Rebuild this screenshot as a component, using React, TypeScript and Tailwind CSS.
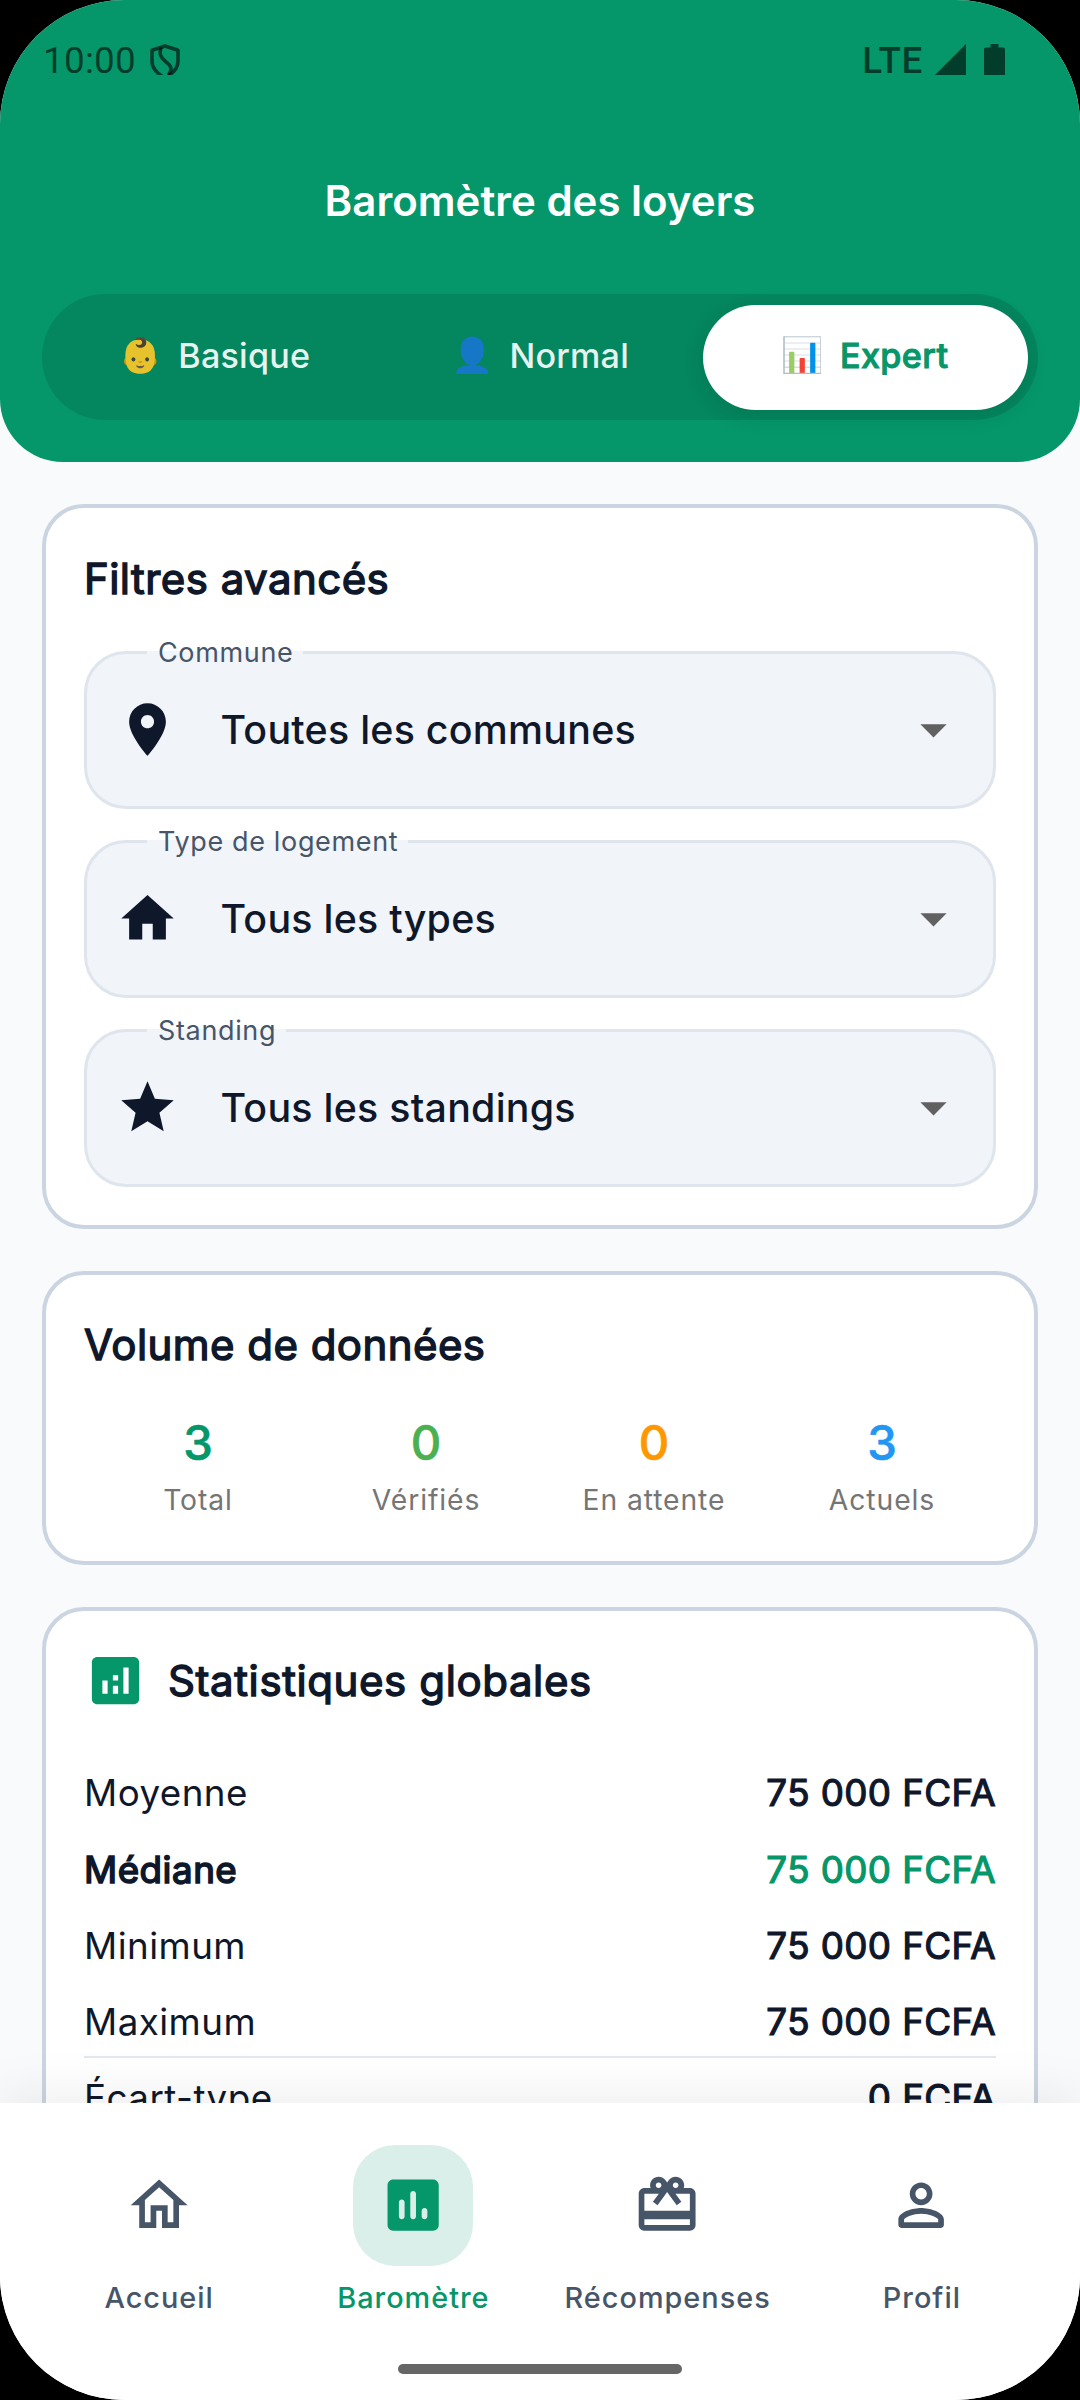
import React from "react";

const ICONS = {
  pin: "M12 2C8.13 2 5 5.13 5 9c0 5.25 7 13 7 13s7-7.75 7-13c0-3.87-3.13-7-7-7zm0 9.5c-1.38 0-2.5-1.12-2.5-2.5s1.12-2.5 2.5-2.5 2.5 1.12 2.5 2.5-1.12 2.5-2.5 2.5z",
  home: "M10 20v-6h4v6h5v-8h3L12 3 2 12h3v8z",
  star: "M12 17.27L18.18 21l-1.64-7.03L22 9.24l-7.19-.61L12 2 9.19 8.63 2 9.24l5.46 4.73L5.82 21z",
  arrow: "M7 10l5 5 5-5z",
  analytics:
    "M19 3H5c-1.1 0-2 .9-2 2v14c0 1.1.9 2 2 2h14c1.1 0 2-.9 2-2V5c0-1.1-.9-2-2-2zM9 17H7v-5h2v5zm4 0h-2v-3h2v3zm0-5h-2v-2h2v2zm4 5h-2V7h2v10z",
  homeOutline:
    "M12 5.69l5 4.5V18h-2v-6H9v6H7v-7.81l5-4.5M12 3L2 12h3v8h6v-6h2v6h6v-8h3L12 3z",
  chart:
    "M19 3H5c-1.1 0-2 .9-2 2v14c0 1.1.9 2 2 2h14c1.1 0 2-.9 2-2V5c0-1.1-.9-2-2-2zM8 17c-.55 0-1-.45-1-1v-5c0-.55.45-1 1-1s1 .45 1 1v5c0 .55-.45 1-1 1zm4 0c-.55 0-1-.45-1-1V8c0-.55.45-1 1-1s1 .45 1 1v8c0 .55-.45 1-1 1zm4 0c-.55 0-1-.45-1-1v-2c0-.55.45-1 1-1s1 .45 1 1v2c0 .55-.45 1-1 1z",
  gift: "M20 6h-2.18c.11-.31.18-.65.18-1 0-1.66-1.34-3-3-3-1.05 0-1.96.54-2.5 1.35l-.5.67-.5-.68C10.96 2.54 10.05 2 9 2 7.34 2 6 3.34 6 5c0 .35.07.69.18 1H4c-1.11 0-1.99.89-1.99 2L2 19c0 1.11.89 2 2 2h16c1.11 0 2-.89 2-2V8c0-1.11-.89-2-2-2zm-5-2c.55 0 1 .45 1 1s-.45 1-1 1-1-.45-1-1 .45-1 1-1zM9 4c.55 0 1 .45 1 1s-.45 1-1 1-1-.45-1-1 .45-1 1-1zm11 15H4v-2h16v2zm0-5H4V8h5.08L7 10.83 8.62 12 11 8.76l1-1.36 1 1.36L15.38 12 17 10.83 14.92 8H20v6z",
  person:
    "M12 6c1.1 0 2 .9 2 2s-.9 2-2 2-2-.9-2-2 .9-2 2-2m0 9c2.7 0 5.8 1.29 6 2v1H6v-.99c.2-.72 3.3-2.01 6-2.01m0-11C9.79 4 8 5.79 8 8s1.79 4 4 4 4-1.79 4-4-1.79-4-4-4zm0 9c-2.67 0-8 1.34-8 4v2c0 .55.45 1 1 1h14c.55 0 1-.45 1-1v-2c0-2.66-5.33-4-8-4z",
};

type IconName = keyof typeof ICONS;

function Icon({ name, className }: { name: IconName; className: string }) {
  return (
    <svg viewBox="0 0 24 24" fill="currentColor" className={className}>
      <path d={ICONS[name]} />
    </svg>
  );
}

const tabs = [
  { emoji: "👶", label: "Basique", active: false },
  { emoji: "👤", label: "Normal", active: false },
  { emoji: "📊", label: "Expert", active: true },
];

const filters: { label: string; value: string; icon: IconName }[] = [
  { label: "Commune", value: "Toutes les communes", icon: "pin" },
  { label: "Type de logement", value: "Tous les types", icon: "home" },
  { label: "Standing", value: "Tous les standings", icon: "star" },
];

const volumes = [
  { value: 3, label: "Total", color: "text-[#059669]" },
  { value: 0, label: "Vérifiés", color: "text-[#4caf50]" },
  { value: 0, label: "En attente", color: "text-[#ff9800]" },
  { value: 3, label: "Actuels", color: "text-[#2196f3]" },
];

const stats = [
  { label: "Moyenne", value: "75 000 FCFA", highlight: false },
  { label: "Médiane", value: "75 000 FCFA", highlight: true },
  { label: "Minimum", value: "75 000 FCFA", highlight: false },
  { label: "Maximum", value: "75 000 FCFA", highlight: false },
];

const navItems: { label: string; icon: IconName; active: boolean }[] = [
  { label: "Accueil", icon: "homeOutline", active: false },
  { label: "Baromètre", icon: "chart", active: true },
  { label: "Récompenses", icon: "gift", active: false },
  { label: "Profil", icon: "person", active: false },
];

function StatusBar() {
  return (
    <div className="flex h-[121px] items-center justify-between pl-[43px] pr-[75px] font-['Roboto',sans-serif] text-[36.75px] text-black/60">
      <div className="flex items-center gap-[14px]">
        <span className="tracking-[0.3px]">10:00</span>
        <svg
          viewBox="0 0 30 31"
          className="mb-[3px] h-[31px] w-[30px]"
          fill="none"
          stroke="currentColor"
          strokeWidth="3.6"
          strokeLinejoin="round"
        >
          <path d="M12 32C5.500 28 2 23 2 17V6.300L15 2l13 4.300V17c0 6-3.500 11-10 15" />
          <path d="M11 3.500C9 10 10.500 13.500 15.500 17.500 21.500 22 22.500 25 18.500 31" />
        </svg>
      </div>
      <div className="flex items-center">
        <span className="font-medium tracking-[0.7px]">LTE</span>
        <svg viewBox="0 0 31 31" className="mb-[3px] ml-[12px] h-[31px] w-[31px]" fill="currentColor">
          <path d="M31 0v31H0z" />
        </svg>
        <svg viewBox="0 0 21 31" className="mb-[3px] ml-[18px] h-[31px] w-[21px]" fill="currentColor">
          <path d="M6.500 0h8v3.500H19q2 0 2 2V31H0V5.500q0-2 2-2h4.500z" />
        </svg>
      </div>
    </div>
  );
}

function Header() {
  return (
    <header className="h-[462px] shrink-0 rounded-b-[63px] bg-[#059669]">
      <StatusBar />
      <h1 className="flex h-[158px] items-center justify-center text-[42px] font-semibold text-white">
        Baromètre des loyers
      </h1>
      <div className="mx-[42px] mt-[15px] flex h-[126px] rounded-full bg-black/10 p-[10.5px]">
        {tabs.map((tab) => (
          <div
            key={tab.label}
            className={
              tab.active
                ? "flex flex-1 items-center justify-center gap-[16px] rounded-full bg-white pb-[2px] text-[34.125px] font-medium tracking-[0.4px] text-[#059669] shadow-[0_5px_21px_rgba(0,0,0,0.1)] [-webkit-text-stroke:1px]"
                : "flex flex-1 items-center justify-center gap-[16px] pb-[2px] text-[34.125px] font-medium tracking-[0.2px] text-white opacity-90"
            }
          >
            <span className="font-['Noto_Color_Emoji',sans-serif] text-[34.125px] tracking-normal">
              {tab.emoji}
            </span>
            <span>{tab.label}</span>
          </div>
        ))}
      </div>
    </header>
  );
}

function Card({ children }: { children: React.ReactNode }) {
  return (
    <section className="shrink-0 rounded-[42px] border-4 border-[#cbd5e1] bg-white p-[38px]">
      {children}
    </section>
  );
}

function CardTitle({ children }: { children: React.ReactNode }) {
  return (
    <h2 className="text-[42px] leading-[64px] font-normal tracking-[0.45px] [-webkit-text-stroke:1.4px]">
      {children}
    </h2>
  );
}

function FilterField({ label, value, icon }: { label: string; value: string; icon: IconName }) {
  return (
    <div className="relative flex h-[157.5px] items-center rounded-[42px] border-[3px] border-[#dee5ed] bg-[#f1f4f9] px-[28.5px]">
      {/* floating label sits on the notched top border */}
      <div className="absolute -top-[3px] left-[60px] flex h-[3px] items-center bg-[#f1f4f9] pr-[10px] pl-[11px] text-[27px] tracking-[0.65px] text-[#475569]">
        <span className="mt-[2px]">{label}</span>
      </div>
      <Icon name={icon} className="size-[63px]" />
      <span className="ml-[42px] flex-1 text-[39.375px] font-medium tracking-[0.25px]">{value}</span>
      <Icon name="arrow" className="size-[63px] text-[#616161]" />
    </div>
  );
}

function StatRow({ label, value, highlight }: { label: string; value: string; highlight: boolean }) {
  return (
    <div className="flex h-[54px] items-center justify-between text-[36.75px]">
      <span
        className={
          highlight ? "tracking-[0.5px] [-webkit-text-stroke:1.6px]" : "tracking-[0.45px]"
        }
      >
        {label}
      </span>
      <span
        className={
          highlight
            ? "tracking-[0.4px] text-[#059669] [-webkit-text-stroke:1.2px]"
            : "tracking-[0.4px] [-webkit-text-stroke:1.2px]"
        }
      >
        {value}
      </span>
    </div>
  );
}

function BottomNav() {
  return (
    <nav className="relative flex h-[297px] shrink-0 flex-col items-center bg-white shadow-[0_-5px_52px_rgba(0,0,0,0.08)]">
      <div className="grid w-full grid-cols-4 px-[31.5px] pt-[42px]">
        {navItems.map((item) => (
          <div
            key={item.label}
            className={
              item.active
                ? "flex flex-col items-center text-[#059669]"
                : "flex flex-col items-center text-[#475569]"
            }
          >
            <div
              className={
                item.active
                  ? "flex size-[120.75px] items-center justify-center rounded-[42px] bg-[#059669]/15"
                  : "flex size-[120.75px] items-center justify-center"
              }
            >
              <Icon name={item.icon} className="size-[68.25px]" />
            </div>
            <span className="mt-[11px] pl-[1px] text-[28.875px] leading-[42px] font-medium tracking-[1px]">
              {item.label}
            </span>
          </div>
        ))}
      </div>
      <div className="mt-auto mb-[26px] h-[10px] w-[284px] rounded-full bg-[#666666]" />
    </nav>
  );
}

export default function App() {
  return (
    <div className="h-[2400px] w-[1080px] bg-black">
      <div className="flex h-full flex-col overflow-hidden rounded-[124px] bg-[#f8fafc] font-['Inter',sans-serif] text-[#0f172a]">
        <Header />
        <main className="flex min-h-0 flex-1 flex-col gap-[42px] overflow-hidden px-[42px] pt-[42px]">
          <Card>
            <div className="pt-[1px]">
              <CardTitle>Filtres avancés</CardTitle>
            </div>
            <div className="mt-[40px] flex flex-col gap-[31.5px]">
              {filters.map((f) => (
                <FilterField key={f.label} {...f} />
              ))}
            </div>
          </Card>

          <Card>
            <CardTitle>Volume de données</CardTitle>
            <div className="mt-[34px] grid grid-cols-4 text-center">
              {volumes.map((v) => (
                <div key={v.label}>
                  <div
                    className={`text-[47.25px] leading-[63px] font-medium [-webkit-text-stroke:0.6px] ${v.color}`}
                  >
                    {v.value}
                  </div>
                  <div className="mt-[3px] text-[28.3px] leading-[46px] tracking-[0.9px] text-[#757575]">
                    {v.label}
                  </div>
                </div>
              ))}
            </div>
          </Card>

          <Card>
            <div className="flex h-[63px] items-center gap-[21px] tracking-[0.6px]">
              <Icon name="analytics" className="size-[63px] text-[#059669]" />
              <h2 className="text-[42px] leading-[63px] font-normal [-webkit-text-stroke:1.4px]">
                Statistiques globales
              </h2>
            </div>
            <div className="mt-[54.5px] flex flex-col gap-[22.125px]">
              {stats.map((s) => (
                <StatRow key={s.label} {...s} />
              ))}
            </div>
            <div className="mt-[7.5px] h-[2px] bg-[#e2e8f0]" />
            <div className="mt-[13px]">
              <StatRow label="Écart-type" value="0 FCFA" highlight={false} />
            </div>
          </Card>
        </main>
        <BottomNav />
      </div>
    </div>
  );
}
